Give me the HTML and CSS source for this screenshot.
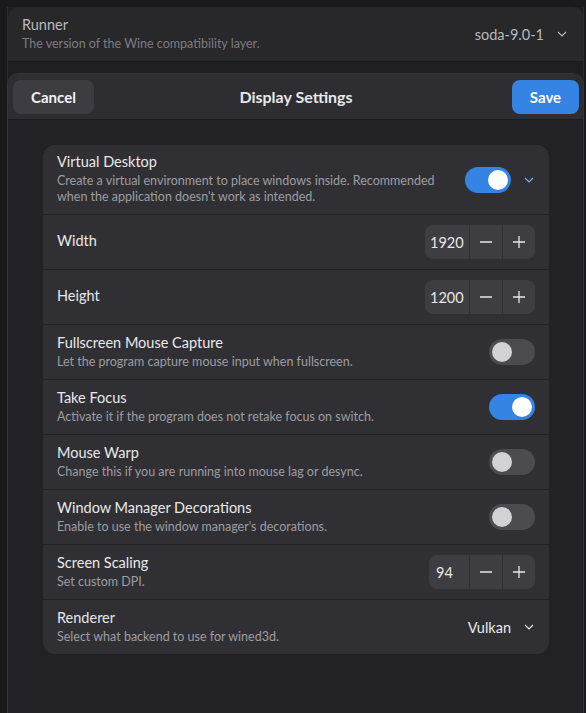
FILE: index.html
```html
<!DOCTYPE html>
<html lang="en">
<head>
  <meta charset="UTF-8">
  <title>Display Settings</title>
  <link rel="stylesheet" href="styles.css">
</head>
<body>

<div class="window">
  <div class="runner-card">
    <div class="row-text">
      <div class="row-title">Runner</div>
      <div class="row-sub">The version of the Wine compatibility layer.</div>
    </div>
    <div class="dropdown">soda-9.0-1
      <svg class="chev" width="12" height="12" viewBox="0 0 12 12"><polyline points="2,4 6,8 10,4" fill="none" stroke="currentColor" stroke-width="1.2"/></svg>
    </div>
  </div>

  <div class="dialog">
    <div class="header">
      <button class="btn">Cancel</button>
      <div class="header-title">Display Settings</div>
      <button class="btn btn-blue">Save</button>
    </div>

    <div class="content">
      <div class="card">
        <div class="row row-tall">
          <div class="row-text">
            <div class="row-title">Virtual Desktop</div>
            <div class="row-sub">Create a virtual environment to place windows inside. Recommended<br>when the application doesn't work as intended.</div>
          </div>
          <div class="switch on"><div class="knob"></div></div>
          <svg class="chev blue" width="12" height="12" viewBox="0 0 12 12"><polyline points="2,4 6,8 10,4" fill="none" stroke="currentColor" stroke-width="1.2"/></svg>
        </div>

        <div class="row">
          <div class="row-text"><div class="row-title">Width</div></div>
          <div class="spin">
            <div class="spin-val">1920</div>
            <div class="spin-btn"><svg width="14" height="14" viewBox="0 0 14 14"><line x1="1" y1="7" x2="13" y2="7" stroke="currentColor" stroke-width="1.3"/></svg></div>
            <div class="spin-btn"><svg width="14" height="14" viewBox="0 0 14 14"><line x1="1" y1="7" x2="13" y2="7" stroke="currentColor" stroke-width="1.3"/><line x1="7" y1="1" x2="7" y2="13" stroke="currentColor" stroke-width="1.3"/></svg></div>
          </div>
        </div>

        <div class="row">
          <div class="row-text"><div class="row-title">Height</div></div>
          <div class="spin">
            <div class="spin-val">1200</div>
            <div class="spin-btn"><svg width="14" height="14" viewBox="0 0 14 14"><line x1="1" y1="7" x2="13" y2="7" stroke="currentColor" stroke-width="1.3"/></svg></div>
            <div class="spin-btn"><svg width="14" height="14" viewBox="0 0 14 14"><line x1="1" y1="7" x2="13" y2="7" stroke="currentColor" stroke-width="1.3"/><line x1="7" y1="1" x2="7" y2="13" stroke="currentColor" stroke-width="1.3"/></svg></div>
          </div>
        </div>

        <div class="row">
          <div class="row-text">
            <div class="row-title">Fullscreen Mouse Capture</div>
            <div class="row-sub">Let the program capture mouse input when fullscreen.</div>
          </div>
          <div class="switch"><div class="knob"></div></div>
        </div>

        <div class="row">
          <div class="row-text">
            <div class="row-title">Take Focus</div>
            <div class="row-sub">Activate it if the program does not retake focus on switch.</div>
          </div>
          <div class="switch on"><div class="knob"></div></div>
        </div>

        <div class="row">
          <div class="row-text">
            <div class="row-title">Mouse Warp</div>
            <div class="row-sub">Change this if you are running into mouse lag or desync.</div>
          </div>
          <div class="switch"><div class="knob"></div></div>
        </div>

        <div class="row">
          <div class="row-text">
            <div class="row-title">Window Manager Decorations</div>
            <div class="row-sub">Enable to use the window manager's decorations.</div>
          </div>
          <div class="switch"><div class="knob"></div></div>
        </div>

        <div class="row">
          <div class="row-text">
            <div class="row-title">Screen Scaling</div>
            <div class="row-sub">Set custom DPI.</div>
          </div>
          <div class="spin">
            <div class="spin-val small">94</div>
            <div class="spin-btn"><svg width="14" height="14" viewBox="0 0 14 14"><line x1="1" y1="7" x2="13" y2="7" stroke="currentColor" stroke-width="1.3"/></svg></div>
            <div class="spin-btn"><svg width="14" height="14" viewBox="0 0 14 14"><line x1="1" y1="7" x2="13" y2="7" stroke="currentColor" stroke-width="1.3"/><line x1="7" y1="1" x2="7" y2="13" stroke="currentColor" stroke-width="1.3"/></svg></div>
          </div>
        </div>

        <div class="row">
          <div class="row-text">
            <div class="row-title">Renderer</div>
            <div class="row-sub">Select what backend to use for wined3d.</div>
          </div>
          <div class="dropdown">Vulkan
            <svg class="chev" width="12" height="12" viewBox="0 0 12 12"><polyline points="2,4 6,8 10,4" fill="none" stroke="currentColor" stroke-width="1.2"/></svg>
          </div>
        </div>
      </div>
    </div>
  </div>
</div>

</body>
</html>
```

FILE: styles.css
```css
* {margin:0;padding:0;box-sizing:border-box;}
body {
  height: 100vh;
  overflow: hidden;
  background: #1a1a1c;
  font-family: Lato, "Noto Sans", sans-serif;
  color: #e8e8ea;
}
.window {
  position: relative;
  margin-left: 7px;
  width: 577px;
  height: 100vh;
  background: #1f1f22;
  border-left: 1px solid #2c2c30;
  border-right: 1px solid #2c2c30;
}

.runner-card {
  margin-top: 7px;
  height: 55px;
  background: #28282b;
  border-radius: 10px 10px 0 0;
  border-bottom: 1px solid #1a1a1c;
  display: flex;
  align-items: center;
  padding: 0 15px 0 14px;
}
.runner-card .row-title { color: #b8b8bb; }
.runner-card .row-sub { color: #7c7c80; }
.runner-card .dropdown { color: #b8b8bb; }

.row-text { flex: 1; min-width: 0; margin-top: -2px; }
.row-title {
  font-size: 14.5px;
  line-height: 19px;
  margin-bottom: 2px;
}
.row-sub {
  font-size: 12.5px;
  line-height: 16px;
  color: #9d9da1;
}

.dropdown {
  display: flex;
  align-items: center;
  gap: 12px;
  font-size: 14.5px;
}
.chev { display: block; }
.chev.blue { color: #78aeed; margin-left: 12px; }

/* dialog on top of the runner page */
.dialog {
  position: absolute;
  top: 66px;
  left: -1px;
  right: -1px;
  bottom: 0;
  background: #222226;
  border: 1px solid #36363a;
  border-bottom: none;
  border-radius: 12px 12px 0 0;
  overflow: hidden;
}
.header {
  height: 46px;
  background: #2e2e32;
  border-bottom: 1px solid #1c1c1f;
  display: grid;
  grid-template-columns: 1fr auto 1fr;
  align-items: center;
  padding: 0 4px 0 5px;
}
.header-title {
  font-size: 16px;
  font-weight: bold;
}
.btn {
  height: 34px;
  border: none;
  border-radius: 8px;
  background: #3d3d41;
  color: #f2f2f4;
  font-family: inherit;
  font-size: 15px;
  font-weight: bold;
  width: 81px;
}
.btn-blue {
  background: #3584e4;
  color: #fff;
  width: 67px;
  justify-self: end;
}

.content {
  padding: 25px 34px 0 35px;
}
.card {
  background: #303034;
  border-radius: 12px;
  overflow: hidden;
}
.row {
  display: flex;
  align-items: center;
  min-height: 55px;
  padding: 0 14px;
  border-top: 1px solid #232327;
}
.row:first-child { border-top: none; }
.row-tall { min-height: 69px; }

.switch {
  width: 46px;
  height: 26px;
  border-radius: 13px;
  background: #4b4b50;
  padding: 3px;
  flex-shrink: 0;
}
.switch .knob {
  width: 20px;
  height: 20px;
  border-radius: 50%;
  background: #d2d2d4;
}
.switch.on { background: #3584e4; }
.switch.on .knob { background: #fff; margin-left: 20px; }

.spin {
  display: flex;
  height: 34px;
  border-radius: 8px;
  background: #3e3e42;
  overflow: hidden;
}
.spin-val {
  width: 44px;
  display: flex;
  align-items: center;
  padding-left: 5px;
  font-size: 14.5px;
}
.spin-val.small { width: 40px; padding-left: 7px; }
.spin-btn {
  width: 33px;
  display: flex;
  align-items: center;
  justify-content: center;
  border-left: 1px solid #303034;
  color: #e8e8ea;
}
.spin-btn svg { display: block; }
```
